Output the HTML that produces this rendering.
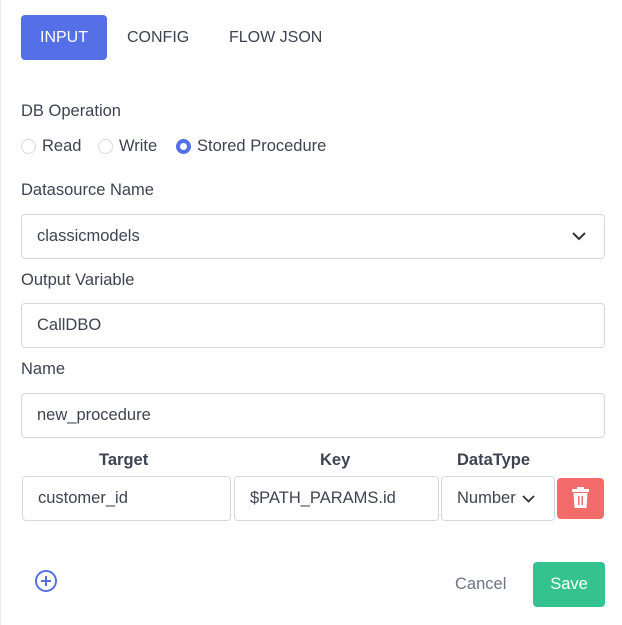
<!DOCTYPE html>
<html><head><style>
*{box-sizing:border-box;margin:0;padding:0}
body{width:622px;height:625px;background:#fff;font-family:"Liberation Sans",sans-serif;color:#3d4451;position:relative;overflow:hidden}
.a{position:absolute}
.tab{position:absolute;top:15px;height:45px;line-height:45px;font-size:16px;color:#3d4451}
.lbl{position:absolute;left:21px;font-size:16.5px;color:#3d4451}
.inp{position:absolute;left:21px;width:584px;height:45px;border:1px solid #d4d8de;border-radius:4px;font-size:16.5px;line-height:43px;padding-left:15px;color:#3d4451}
.rad{position:absolute;top:139px;width:15px;height:15px;border:1px solid #d6d9de;border-radius:50%}
.th{position:absolute;top:451px;font-size:16.5px;font-weight:bold;color:#3d4451}
.cell{position:absolute;top:476px;height:45px;border:1px solid #d4d8de;border-radius:4px;font-size:16.5px;line-height:43px;padding-left:15px}
</style></head><body>
<div class="a" style="left:0;top:0;width:1px;height:625px;background:#eee"></div>
<div class="a" style="left:21px;top:15px;width:86px;height:45px;background:#5570e6;border-radius:4px;color:#fff;font-size:16px;line-height:45px;text-align:center">INPUT</div>
<div class="tab" style="left:127px">CONFIG</div>
<div class="tab" style="left:229px">FLOW JSON</div>
<div class="lbl" style="top:102px">DB Operation</div>
<div class="rad" style="left:21px"></div><div class="a" style="left:42px;top:137px;font-size:16.5px">Read</div>
<div class="rad" style="left:98px"></div><div class="a" style="left:119px;top:137px;font-size:16.5px">Write</div>
<div class="rad" style="left:176px;border:4px solid #5570e6"></div><div class="a" style="left:197px;top:137px;font-size:16.5px">Stored Procedure</div>
<div class="lbl" style="top:181px">Datasource Name</div>
<div class="inp" style="top:214px">classicmodels<svg class="a" style="right:18px;top:16px" width="14" height="10" viewBox="0 0 14 10"><path d="M1 2l6 6 6-6" fill="none" stroke="#333" stroke-width="2"/></svg></div>
<div class="lbl" style="top:271px">Output Variable</div>
<div class="inp" style="top:303px">CallDBO</div>
<div class="lbl" style="top:360px">Name</div>
<div class="inp" style="top:393px">new_procedure</div>
<div class="th" style="left:99px">Target</div>
<div class="th" style="left:320px">Key</div>
<div class="th" style="left:457px">DataType</div>
<div class="cell" style="left:22px;width:209px">customer_id</div>
<div class="cell" style="left:234px;width:205px">$PATH_PARAMS.id</div>
<div class="cell" style="left:441px;width:114px;overflow:hidden;white-space:nowrap;padding-left:15px"><span style="display:inline-block;width:63px;overflow:hidden;vertical-align:top">Number</span><svg class="a" style="left:80px;top:17px" width="13" height="9" viewBox="0 0 13 9"><path d="M1 2l5.5 5.5L12 2" fill="none" stroke="#333" stroke-width="1.8"/></svg></div>
<div class="a" style="left:557px;top:478px;width:47px;height:41px;background:#f36b6b;border-radius:4px">
<svg class="a" style="left:15px;top:9px" width="17" height="22" viewBox="0 0 17 22"><rect x="0" y="2" width="17" height="3" fill="#fff"/><rect x="5" y="0" width="7" height="3" fill="#fff"/><path d="M1.5 6h14l-1 15h-12z" fill="#fff"/><rect x="6" y="9" width="1.5" height="9" fill="#f36b6b"/><rect x="9.5" y="9" width="1.5" height="9" fill="#f36b6b"/></svg></div>
<svg class="a" style="left:34px;top:569px" width="24" height="24" viewBox="0 0 24 24"><circle cx="12" cy="12" r="10" fill="none" stroke="#5570e6" stroke-width="2"/><path d="M12 7v10M7 12h10" stroke="#5570e6" stroke-width="2"/></svg>
<div class="a" style="left:455px;top:575px;font-size:16.5px;color:#6c7583">Cancel</div>
<div class="a" style="left:533px;top:562px;width:72px;height:45px;background:#34c38f;border-radius:4px;color:#fff;font-size:16.5px;line-height:45px;text-align:center">Save</div>
</body></html>
